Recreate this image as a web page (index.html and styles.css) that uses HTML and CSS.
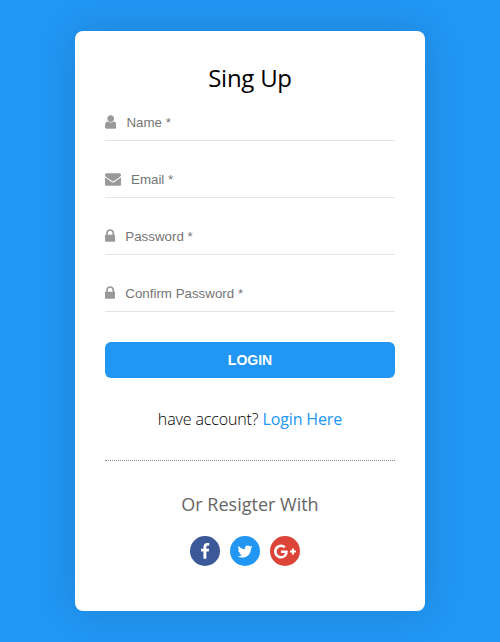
FILE: index.html
```html
<!DOCTYPE html>
<html lang="en">
<head>
<meta charset="utf-8">
<title>Sign up</title>
<link rel="stylesheet" href="styles.css">
</head>
<body>
<main class="card">
  <h1 class="title">Sing Up</h1>
  <form class="form">
    <div class="field">
      <svg class="icon" width="11.430" height="16" viewBox="0 -1536 1280 1792"><path transform="scale(1,-1)" d="M1280 137q0 -109 -62.500 -187t-150.500 -78h-854q-88 0 -150.500 78t-62.500 187q0 85 8.500 160.500t31.500 152t58.500 131t94 89t134.500 34.500q131 -128 313 -128t313 128q76 0 134.500 -34.500t94 -89t58.500 -131t31.500 -152t8.500 -160.500zM1024 1024q0 -159 -112.500 -271.500t-271.500 -112.500t-271.500 112.500t-112.500 271.500t112.500 271.500t271.500 112.500t271.500 -112.500t112.500 -271.500z"/></svg>
      <input class="input" type="text" placeholder="Name *">
    </div>
    <div class="field">
      <svg class="icon" width="16" height="16" viewBox="0 -1536 1792 1792"><path transform="scale(1,-1)" d="M1792 826v-794q0 -66 -47 -113t-113 -47h-1472q-66 0 -113 47t-47 113v794q44 -49 101 -87q362 -246 497 -345q57 -42 92.500 -65.500t94.500 -48t110 -24.500h2q51 0 110 24.500t94.500 48t92.500 65.500q170 123 498 345q57 39 100 87zM1792 1120q0 -79 -49 -151t-122 -123q-376 -261 -468 -325q-10 -7 -42.500 -30.500t-54 -38t-52 -32.500t-57.500 -27t-50 -9h-2q-23 0 -50 9t-57.500 27t-52 32.500t-54 38t-42.500 30.500q-91 64 -262 182.500t-205 142.500q-62 42 -117 115.500t-55 136.500q0 78 41.500 130t118.500 52h1472q65 0 112.500 -47t47.500 -113z"/></svg>
      <input class="input" type="text" placeholder="Email *">
    </div>
    <div class="field">
      <svg class="icon" width="10.300" height="16" viewBox="0 -1536 1152 1792"><path transform="scale(1,-1)" d="M320 768h512v192q0 106 -75 181t-181 75t-181 -75t-75 -181v-192zM1152 672v-576q0 -40 -28 -68t-68 -28h-960q-40 0 -68 28t-28 68v576q0 40 28 68t68 28h32v192q0 184 132 316t316 132t316 -132t132 -316v-192h32q40 0 68 -28t28 -68z"/></svg>
      <input class="input" type="password" placeholder="Password *">
    </div>
    <div class="field">
      <svg class="icon" width="10.300" height="16" viewBox="0 -1536 1152 1792"><path transform="scale(1,-1)" d="M320 768h512v192q0 106 -75 181t-181 75t-181 -75t-75 -181v-192zM1152 672v-576q0 -40 -28 -68t-68 -28h-960q-40 0 -68 28t-28 68v576q0 40 28 68t68 28h32v192q0 184 132 316t316 132t316 -132t132 -316v-192h32q40 0 68 -28t28 -68z"/></svg>
      <input class="input" type="password" placeholder="Confirm Password *">
    </div>
    <button class="submit" type="button">LOGIN</button>
  </form>
  <p class="account">have account? <a class="link" href="#">Login Here</a></p>
  <hr class="rule">
  <h2 class="subtitle">Or Resigter With</h2>
  <div class="socials">
    <a class="social facebook" href="#"><svg width="10" height="17" viewBox="0 -1536 1024 1792"><path transform="scale(1,-1)" d="M959 1524v-264h-157q-86 0 -116 -36t-30 -108v-189h293l-39 -296h-254v-759h-306v759h-255v296h255v218q0 186 104 288.500t277 102.500q147 0 228 -12z"/></svg></a>
    <a class="social twitter" href="#"><svg width="16" height="17" viewBox="0 -1536 1664 1792"><path transform="scale(1,-1)" d="M1620 1128q-67 -98 -162 -167q1 -14 1 -42q0 -130 -38 -259.500t-115.500 -248.500t-184.500 -210.500t-258 -146t-323 -54.500q-271 0 -496 145q35 -4 78 -4q225 0 401 138q-105 2 -188 64.500t-114 159.500q33 -5 61 -5q43 0 85 11q-112 23 -185.500 111.500t-73.500 205.500v4q68 -38 146 -41q-66 44 -105 115t-39 154q0 88 44 163q121 -149 294.500 -238.500t371.500 -99.500q-8 38 -8 74q0 134 94.500 228.500t228.500 94.500q140 0 236 -102q109 21 205 78q-37 -115 -142 -178q93 10 186 50z"/></svg></a>
    <a class="social google" href="#"><svg width="22" height="17" viewBox="0 -1536 2304 1792"><path transform="scale(1,-1)" d="M1437 623q0 -208 -87 -370.500t-248 -254t-369 -91.500q-149 0 -285 58t-234 156t-156 234t-58 285t58 285t156 234t234 156t285 58q286 0 491 -192l-199 -191q-117 113 -292 113q-123 0 -227.500 -62t-165.500 -168.500t-61 -232.500t61 -232.500t165.500 -168.500t227.500 -62q83 0 152.500 23t114.500 57.500t78.500 78.500t49 83t21.500 74h-416v252h692q12 -63 12 -122zM2304 745v-210h-209v-209h-210v209h-209v210h209v209h210v-209h209z"/></svg></a>
  </div>
</main>
</body>
</html>
```
FILE: styles.css
```css
* { box-sizing: border-box; }
body {
  margin: 0;
  min-height: 642px;
  background: #2196f3;
  font-family: "Open Sans", sans-serif;
  display: flex;
  align-items: center;
  justify-content: center;
}
.card {
  width: 350px;
  height: 580px;
  padding: 30px;
  background: #fff;
  border-radius: 8px;
  box-shadow: 0 0 40px rgba(0, 0, 0, .12);
}
.title {
  margin: 0;
  font-size: 24px;
  line-height: 34px;
  font-weight: 400;
  letter-spacing: -.25px;
  text-align: center;
}
.field {
  display: flex;
  align-items: center;
  height: 37px;
  margin-bottom: 20px;
  border-bottom: 1px solid #e5e5e5;
}
.form .field:first-child { margin-top: 9px; }
.icon { fill: #999; flex: none; }
.input {
  flex: 1;
  min-width: 0;
  margin-left: 10px;
  padding: 0;
  border: 0;
  outline: 0;
  background: transparent;
  font: 13.333px "Liberation Sans", sans-serif;
}
.input::placeholder { color: #757575; }
.submit {
  display: block;
  width: 100%;
  height: 36px;
  margin-top: 30px;
  padding: 0;
  border: 0;
  border-radius: 6px;
  background: #2196f3;
  color: #fff;
  font: bold 14px "Liberation Sans", sans-serif;
}
.account {
  margin: 30px 0;
  font-size: 16px;
  line-height: 22px;
  font-weight: 300;
  letter-spacing: -.13px;
  text-align: center;
}
.link { color: #2196f3; text-decoration: none; font-weight: 400; }
.rule { margin: 0; border: 0; border-top: 1px dotted #888; }
.subtitle {
  margin: 30px 0 19px;
  font-size: 18px;
  line-height: 26px;
  font-weight: 400;
  color: #666;
  text-align: center;
}
.socials { display: flex; justify-content: center; gap: 10px; padding-right: 10px; }
.social {
  width: 30px;
  height: 30px;
  border-radius: 50%;
  display: flex;
  align-items: center;
  justify-content: center;
}
.social svg { fill: #fff; }
.facebook { background: #3b5998; }
.twitter { background: #2196f3; }
.google { background: #db4437; }
```
